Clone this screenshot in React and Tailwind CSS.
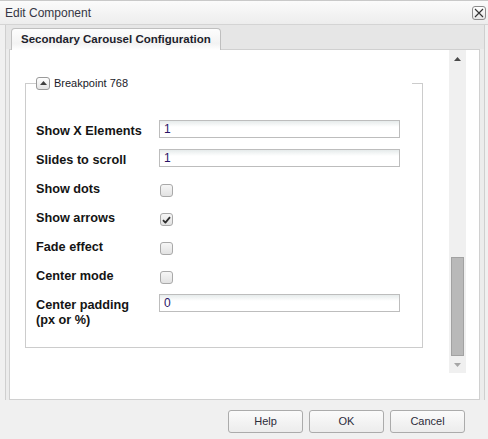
const inputRows = [
  { label: 'Show X Elements', type: 'text', value: '1' },
  { label: 'Slides to scroll', type: 'text', value: '1' },
  { label: 'Show dots', type: 'check', checked: false },
  { label: 'Show arrows', type: 'check', checked: true },
  { label: 'Fade effect', type: 'check', checked: false },
  { label: 'Center mode', type: 'check', checked: false },
  { label: 'Center padding (px or %)', type: 'text', value: '0' },
]

function Checkbox({ checked }) {
  return (
    <div className="mt-[6px] ml-[1px] w-[13px] h-[13px] rounded-[3px] border border-[#a9a9a9] bg-[linear-gradient(180deg,#f6f6f6,#e2e2e2)] flex items-center justify-center">
      {checked && (
        <svg width="9" height="8" viewBox="0 0 9 8">
          <path d="M1 4.2 L3.4 6.6 L8 1.2" fill="none" stroke="#2e2e2e" strokeWidth="1.8" strokeLinejoin="round" />
        </svg>
      )}
    </div>
  )
}

function Row({ row }) {
  return (
    <div className="flex h-[29px] items-start">
      <div className="w-[123px] pr-[12px] pt-[4px] text-[12.7px] leading-[14.5px] font-bold text-[#141414] shrink-0">
        {row.label}
      </div>
      {row.type === 'text' ? (
        <div className="w-[241px] h-[18px] border border-[#bdbdbd] bg-[linear-gradient(180deg,#e6ebeb_0px,#ffffff_6px)] pl-[4px] text-[12px] leading-[17px] text-[#2a1466]">
          {row.value}
        </div>
      ) : (
        <Checkbox checked={row.checked} />
      )}
    </div>
  )
}

export default function App() {
  return (
    <div className="w-[488px] h-[439px] bg-[#f0f0f0] flex flex-col overflow-hidden font-['Liberation_Sans',Arial,sans-serif]">
      {/* Title bar */}
      <div className="h-[25px] shrink-0 border-t border-b border-t-[#c9c9c9] border-b-[#d4d4d4] bg-[linear-gradient(180deg,#fbfbfb,#ededed)] flex items-center justify-between pl-[5px] pr-[2px]">
        <span className="text-[12px] text-[#363644] leading-none mt-[1px]">Edit Component</span>
        <button className="w-[14px] h-[14px] mt-[1px] rounded-[3px] border border-[#8c8c8c] bg-[linear-gradient(180deg,#ffffff,#e6e6e6)] flex items-center justify-center">
          <svg width="10" height="10" viewBox="0 0 10 10">
            <path d="M1 1 L9 9 M9 1 L1 9" stroke="#333" strokeWidth="1.1" />
          </svg>
        </button>
      </div>

      {/* Panel */}
      <div className="ml-[5px] w-[480px] h-[375px] shrink-0 border-l border-r border-[#cfcfcf] bg-[#ececec] flex flex-col">
        <div className="h-[24px] shrink-0 bg-[#e6e6e6] pl-[5px] flex items-start">
          <div className="relative z-10 mt-[3px] h-[22px] w-[210px] rounded-t-[4px] border border-b-0 border-[#bfbfbf] bg-[linear-gradient(180deg,#fdfdfd,#f3f3f3_70%,#ffffff)] pl-[9px] pt-[3px] text-[11.5px] leading-[15px] font-bold text-[#1e1e2c]">
            Secondary Carousel Configuration
          </div>
        </div>

        <div className="flex-1 pl-[3px] pr-[4px] flex flex-col">
          <div className="flex-1 border border-[#d0d0d0] bg-white flex items-start">
            {/* Scrolled form */}
            <div className="w-[439px] h-[323px] overflow-hidden">
              <fieldset className="ml-[15px] mt-[26px] w-[398px] border border-[#cccccc] pt-[30px] pb-[24px]">
                <legend className="ml-[10px] w-[376px] h-[14px] flex items-center gap-[4px]">
                  <span className="w-[14px] h-[13px] rounded-[3px] border border-[#9a9a9a] bg-[linear-gradient(180deg,#ffffff,#e3e3e3)] flex items-center justify-center">
                    <svg width="7" height="4" viewBox="0 0 7 4">
                      <path d="M0 4 L3.5 0 L7 4 Z" fill="#404040" />
                    </svg>
                  </span>
                  <span className="text-[11px] leading-[13px] text-[#1a1a28]">Breakpoint 768</span>
                </legend>
                <div className="pl-[10px]">
                  {inputRows.map((row) => (
                    <Row key={row.label} row={row} />
                  ))}
                </div>
              </fieldset>
            </div>

            {/* Scrollbar */}
            <div className="w-[17px] h-[323px] bg-[#f0f0f0] flex flex-col">
              <div className="h-[17px] flex items-center justify-center">
                <svg width="7" height="4" viewBox="0 0 7 4">
                  <path d="M0 4 L3.5 0 L7 4 Z" fill="#4a4a4a" />
                </svg>
              </div>
              <div className="flex-1 flex flex-col justify-end px-[2px]">
                <div className="h-[99px] border border-[#a2a2a2] bg-[#b9b9b9]" />
              </div>
              <div className="h-[17px] flex items-center justify-center">
                <svg width="7" height="4" viewBox="0 0 7 4">
                  <path d="M0 0 L7 0 L3.5 4 Z" fill="#a6a6a6" />
                </svg>
              </div>
            </div>
          </div>
        </div>
      </div>

      {/* Footer */}
      <div className="flex-1 flex justify-end items-start pt-[10px] pr-[23px] gap-[6px]">
        {['Help', 'OK', 'Cancel'].map((label) => (
          <button
            key={label}
            className="w-[75px] h-[23px] rounded-[3px] border border-[#ababab] bg-[linear-gradient(180deg,#fbfbfb,#ececec)] text-[11px] text-[#2c2c3a]"
          >
            {label}
          </button>
        ))}
      </div>
    </div>
  )
}
